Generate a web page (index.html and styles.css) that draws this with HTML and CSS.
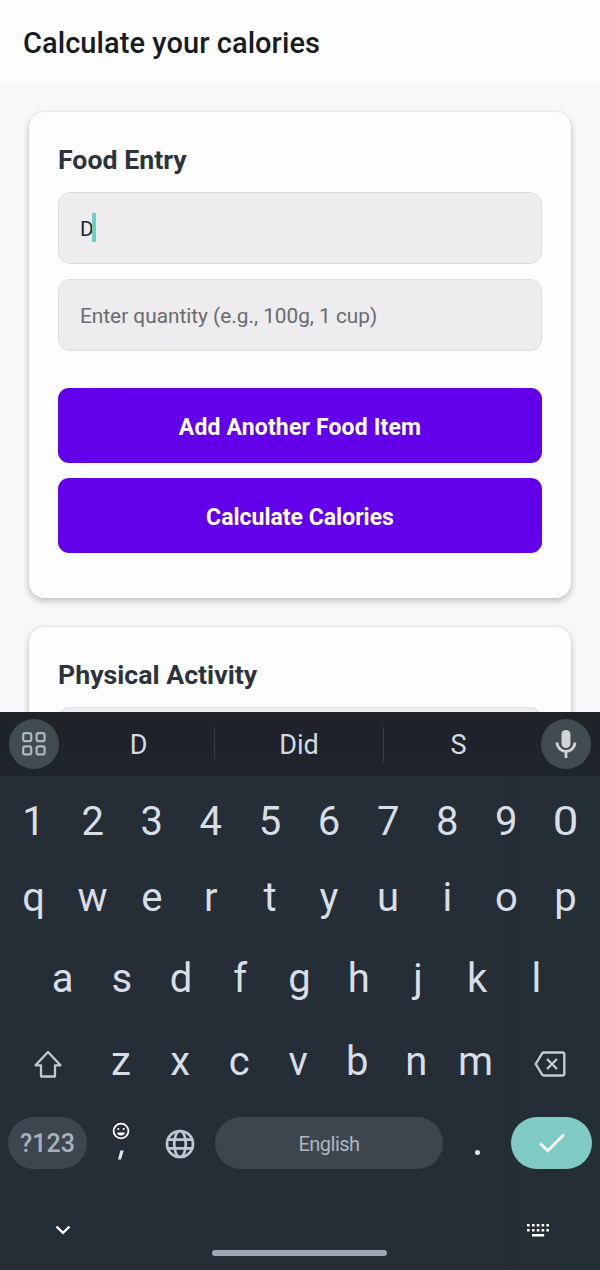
FILE: index.html
```html
<!DOCTYPE html>
<html lang="en">
<head>
<meta charset="utf-8">
<title>Calculate your calories</title>
<link rel="stylesheet" href="styles.css">
</head>
<body>
<div class="screen">
  <header class="app-bar"><h1 class="app-title">Calculate your calories</h1></header>
  <main class="content">
    <section class="card">
      <h2 class="card-title">Food Entry</h2>
      <div class="field"><span class="typed">D</span><span class="caret"></span></div>
      <div class="field placeholder">Enter quantity (e.g., 100g, 1 cup)</div>
      <div class="actions">
        <button class="button add">Add Another Food Item</button>
        <button class="button">Calculate Calories</button>
      </div>
    </section>
    <section class="card">
      <h2 class="card-title">Physical Activity</h2>
      <div class="field"></div>
    </section>
  </main>
  <div class="keyboard">
    <div class="suggestions">
      <div class="round"><svg width="24" height="24" viewBox="0 0 24 24" fill="none" stroke="#aeb7bc" stroke-width="2.2"><rect x="1.2" y="1.2" width="8" height="8" rx="2"/><rect x="14.6" y="1.2" width="8" height="8" rx="2"/><rect x="1.2" y="14.4" width="8" height="8" rx="2"/><rect x="14.6" y="14.4" width="8" height="8" rx="2"/></svg></div>
      <div class="words"><span>D</span><span>Did</span><span>S</span></div>
      <div class="round"><svg width="22" height="30" viewBox="0 0 22 30"><rect x="6.5" y="1" width="9" height="18" rx="4.5" fill="#d2d3d5"/><path d="M2 13.5a9 9 0 0 0 18 0M11 22.5V29" fill="none" stroke="#d2d3d5" stroke-width="2.8"/></svg></div>
    </div>
    <div class="row"><span>1</span><span>2</span><span>3</span><span>4</span><span>5</span><span>6</span><span>7</span><span>8</span><span>9</span><span class="zero">0</span></div>
    <div class="row"><span>q</span><span>w</span><span>e</span><span>r</span><span>t</span><span>y</span><span>u</span><span>i</span><span>o</span><span>p</span></div>
    <div class="row home"><span>a</span><span>s</span><span>d</span><span>f</span><span>g</span><span>h</span><span>j</span><span>k</span><span>l</span></div>
    <div class="row lower">
      <span class="icon"><svg width="30" height="30" viewBox="0 0 30 30" fill="none" stroke="#c3c9d1" stroke-width="2.3" stroke-linejoin="round"><path d="M15 3 27.5 16.3H22V27.5H8V16.3H2.5Z"/></svg></span>
      <span>z</span><span>x</span><span>c</span><span>v</span><span>b</span><span>n</span><span>m</span>
      <span class="icon"><svg width="32" height="28" viewBox="0 0 32 28" fill="none" stroke="#c3c9d1" stroke-width="2.4" stroke-linejoin="round"><path d="M9.7 2.5H28.5Q30.3 2.5 30.3 4.3V23.7Q30.3 25.5 28.5 25.5H9.7Q8.7 25.5 8.2 24.7L1.7 14 8.2 3.3Q8.7 2.5 9.7 2.5Z"/><path d="m13 9 10 10M23 9 13 19"/></svg></span>
    </div>
    <div class="bottom">
      <div class="pill symbols">?123</div>
      <div class="comma"><svg width="18" height="18" viewBox="0 0 18 18"><circle cx="9" cy="9" r="7.4" fill="none" stroke="#fff" stroke-width="1.8"/><circle cx="6.3" cy="7" r="1.1" fill="#fff"/><circle cx="11.7" cy="7" r="1.1" fill="#fff"/><path d="M5.2 10.6h7.6a3.8 3 0 0 1-7.6 0Z" fill="#fff"/></svg><svg width="8" height="10" viewBox="0 0 8 10"><path d="M3.3.5H6.7L4 9.5H1Z" fill="#dfe2ea"/></svg></div>
      <div class="globe"><svg width="30" height="30" viewBox="0 0 30 30" fill="none" stroke="#bfc7d4" stroke-width="2.7"><circle cx="15" cy="15" r="13"/><ellipse cx="15" cy="15" rx="5.8" ry="13"/><path d="M2.5 10.7h25M2.5 19.3h25"/></svg></div>
      <div class="pill space">English</div>
      <div class="dot"><i></i></div>
      <div class="pill enter"><svg width="28" height="22" viewBox="0 0 28 22"><path d="M2 11.2 9.7 18.8 26 2.5" fill="none" stroke="#fff" stroke-width="2.8"/></svg></div>
    </div>
    <div class="nav">
      <svg width="16" height="10" viewBox="0 0 16 10"><path d="m1.5 1.5 6.5 6.3 6.5-6.3" fill="none" stroke="#fff" stroke-width="2.3"/></svg>
      <svg width="24" height="14" viewBox="0 0 24 14" fill="#fff"><path d="M1 1h2.6v2.6H1zM6 1h2.6v2.6H6zM10.8 1h2.6v2.6h-2.6zM15.6 1h2.6v2.6h-2.6zM20.4 1H23v2.6h-2.6zM1 6h2.6v2.6H1zM6 6h2.6v2.6H6zM10.8 6h2.6v2.6h-2.6zM15.6 6h2.6v2.6h-2.6zM20.4 6H23v2.6h-2.6zM6 11h12.2v2.5H6z"/></svg>
    </div>
    <div class="gesture"></div>
  </div>
</div>
</body>
</html>
```

FILE: styles.css
```css
* { box-sizing: border-box; }
body { margin: 0; font-family: Roboto, sans-serif; background: #f8f7f9; }
.screen { width: 600px; height: 1270px; display: flex; flex-direction: column; overflow: hidden; }
.app-bar { height: 82px; flex: none; padding: 3px 23px 0; display: flex; align-items: center; background: #fefdfe; }
.app-title { margin: 0; font-size: 29px; font-weight: 500; line-height: 32px; letter-spacing: .07px; color: #171c22; white-space: nowrap; }
.content { height: 630px; flex: none; overflow: hidden; padding: 30px 29px 0; display: flex; flex-direction: column; gap: 29px; }
.card { flex: none; height: 486px; padding: 32px 29px 0; border-radius: 15px; background: #fefdfe; box-shadow: 0 3px 7px rgba(0,0,0,.23), 0 0 2px rgba(0,0,0,.08); }
.card-title { margin: 0 0 16px; font-size: 26.7px; line-height: 32px; font-weight: 700; color: #2b343c; }
.field { height: 72px; margin-bottom: 15px; padding: 1px 21px 0; border: 1px solid #dcdbdd; border-radius: 12px; background: #eeecee; display: flex; align-items: center; font-size: 20.8px; color: #20262c; }
.placeholder { color: #686b70; }
.typed { width: 12px; }
.caret { width: 4px; height: 29px; margin-top: -2px; background: #67d0be; }
.actions { margin-top: 37px; display: flex; flex-direction: column; gap: 15px; }
.button { height: 75px; padding: 4px 0 0; border: 0; border-radius: 11px; background: #6200ea; color: #fff; font: 700 23px Roboto, sans-serif; }
.add { letter-spacing: .15px; }
.keyboard { height: 558px; flex: none; display: flex; flex-direction: column; background: linear-gradient(90deg, #252d37 70%, #242e35); color: #d8dde6; }
.suggestions { height: 64px; margin-bottom: 8px; padding: 0 9px; display: flex; align-items: center; background: linear-gradient(#212326, #1e232b 35%, #1f252d); }
.round { width: 50px; height: 50px; border-radius: 50%; background: #414b52; display: flex; align-items: center; justify-content: center; }
.words { width: 482px; height: 34px; padding: 0 8px 0 1px; display: grid; grid-template-columns: 154px 169px 1fr; font-size: 27px; line-height: 36px; text-align: center; color: #d6dae1; }
.words span:first-child { padding-left: 3px; }
.words span + span { border-left: 1px solid #343b44; }
.row { height: 76px; padding: 0 5px 0 4px; display: grid; grid-template-columns: repeat(10, 1fr); text-align: center; font-size: 40px; line-height: 76px; }
.zero { transform: scaleX(1.14); }
.home { height: 82px; margin-top: 2px; padding: 0 34px 0 33px; grid-template-columns: repeat(9, 1fr); line-height: 82px; }
.lower { height: 82px; padding: 0 5px; grid-template-columns: 86.5px repeat(7, 1fr) 90px; line-height: 83px; }
.icon { display: flex; align-items: center; justify-content: center; padding-top: 5px; }
.bottom { height: 52px; margin-top: 15px; padding: 0 8px; display: grid; grid-template-columns: 79px 68px 60px 228px 68px 81px; }
.pill { height: 52px; border-radius: 26px; background: #3d464f; display: flex; align-items: center; justify-content: center; }
.symbols { font-size: 25px; font-weight: 500; color: #a9b0ba; }
.space { font-size: 20px; letter-spacing: -.5px; padding-top: 1px; color: #aeb5bf; }
.enter { background: #80cbc4; }
.comma { padding-top: 5px; display: flex; flex-direction: column; align-items: center; gap: 10px; }
.globe, .dot { display: flex; align-items: center; justify-content: center; }
.globe { padding: 1px 11px 0 0; }
.dot i { width: 5px; height: 5px; margin-top: 19px; border-radius: 50%; background: #e3e6ed; }
.nav { height: 81px; padding: 40px 50px 0 55px; display: flex; justify-content: space-between; align-items: center; }
.gesture { width: 175px; height: 6px; margin-left: 212px; border-radius: 3px; background: #a0a5b4; }
```
